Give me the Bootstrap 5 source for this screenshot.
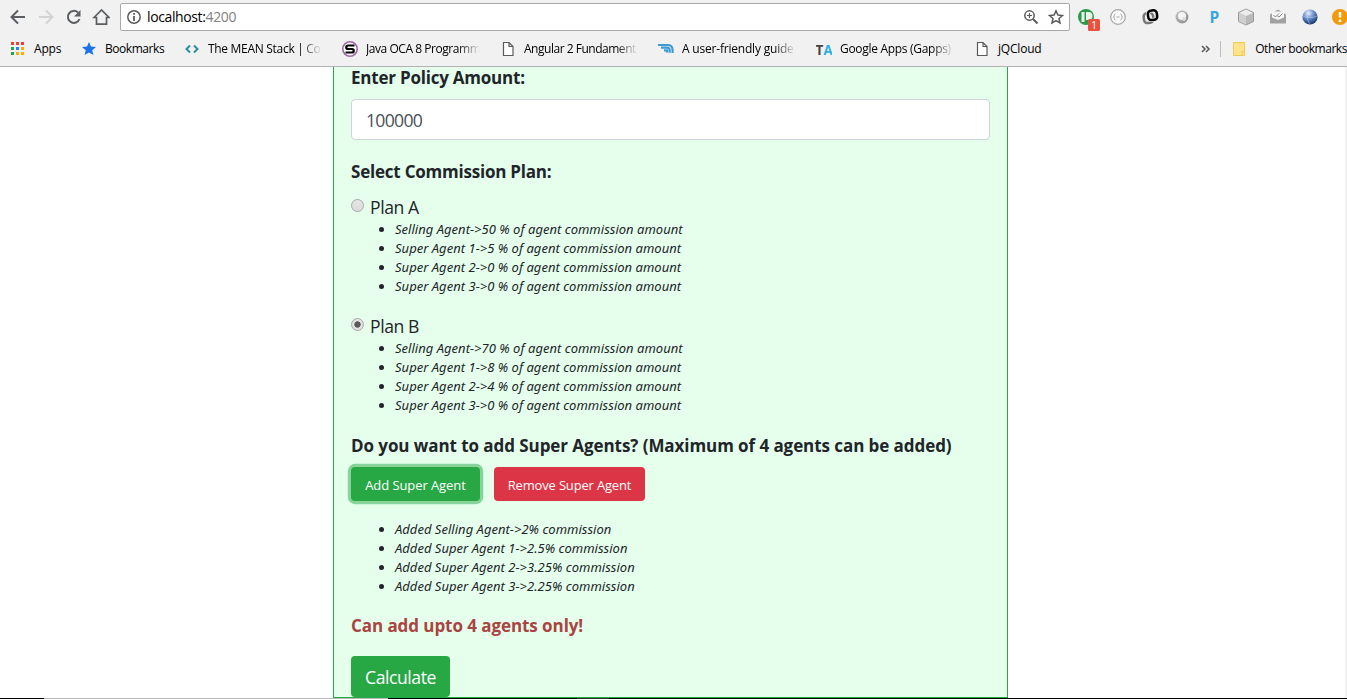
<!DOCTYPE html>
<html lang="en">
<head>
<meta charset="utf-8">
<meta name="viewport" content="width=device-width, initial-scale=1">
<title>Commission Calculator</title>
<link href="https://cdn.jsdelivr.net/npm/bootstrap@5.3.0/dist/css/bootstrap.min.css" rel="stylesheet">
<style>
  body { font-family: "Open Sans", "Noto Sans", sans-serif; color: #212529; height: 699px; overflow: hidden; background: #fff; }
  svg { display: block; flex: none; }
  .browser-bar { height: 67px; background: #f1f1f1; border-bottom: 1px solid #b3b1b3; font-size: 12px; color: #000; overflow: hidden; }
  .tool-row { height: 34px; padding-left: 9px; }
  .omnibox { flex: none; width: 950px; height: 28px; background: #fff; border: 1px solid #a9a8a9; border-radius: 2px; font-size: 14px; padding-left: 5px; padding-right: 4px; margin-left: 10px; }
  .address { letter-spacing: -.38px; margin-left: 5px; line-height: 20px; }
  .address span { color: #808080; }
  .marks-row { height: 30px; padding-left: 9px; }
  .mark-item { flex: none; display: flex; align-items: center; white-space: nowrap; height: 20px; }
  .mark-item svg { margin-right: 7px; }
  .mark-cut { width: 158px; }
  .mark-cut span { width: 114px; margin-left: 1px; -webkit-mask-image: linear-gradient(to left, transparent, #000 22px); mask-image: linear-gradient(to left, transparent, #000 22px); }
  .ls-2 { letter-spacing: -.2px; }
  .ls-3 { letter-spacing: -.3px; }
  .ls-4 { letter-spacing: -.45px; }
  .ls-5 { letter-spacing: -.48px; }
  .bar-sep { width: 1px; height: 16px; background: #bcbcbc; margin: 0 11px 0 8px; }
  .page-area { height: 631px; border-right: 2px solid #f1f1f1; }
  .form-panel { width: 675px; height: 631px; margin-left: 333px; background: #e6ffed; border: 1px solid #28a745; border-top: 0; padding: 0 17px; }
  .field-title { font-size: 17px; font-weight: 700; line-height: 18px; padding-top: 2px; margin: 0; white-space: nowrap; }
  .tight { letter-spacing: -.22px; }
  .snug { letter-spacing: -.07px; }
  .amount-input { height: 41px; font-size: 17.6px; letter-spacing: -.7px; padding: 1px 14px 0; border-color: #ced4da; border-radius: 4px; color: #495057; margin: 12px 0 21px; }
  .plan-label { font-size: 17.6px; height: 26px; line-height: 25px; letter-spacing: -.45px; }
  .plan-dot { appearance: none; flex: none; width: 13px; height: 13px; margin: 0 6px 3px 0; border: 1px solid #a8a8a8; border-radius: 50%; background: linear-gradient(#e6e6e6, #dcdcdc); }
  .plan-dot:checked { background: radial-gradient(circle, #5a5a5a 0 2.8px, #e2e2e2 3.6px); }
  .detail-list { font-family: "Noto Sans", "Open Sans", sans-serif; font-size: 13px; font-style: italic; line-height: 19px; letter-spacing: .02px; margin: 0; padding: 0 0 0 44px; list-style: none; }
  .detail-list li { position: relative; white-space: nowrap; width: max-content; }
  .detail-list li::before { content: ""; position: absolute; left: -16px; top: 7px; width: 5px; height: 5px; border-radius: 50%; background: #212529; }
  .agent-btn { height: 34px; padding: 2px 0 0; font-size: 13px; line-height: 20px; border: 0; border-radius: 4px; white-space: nowrap; color: #fff; }
  .agent-btn:hover { color: #fff; }
  .go-btn, .go-btn:hover { background: #28a745; width: 129px; letter-spacing: -.08px; }
  .stop-btn, .stop-btn:hover { background: #dc3545; width: 151px; letter-spacing: -.17px; }
  .ringed { box-shadow: 0 0 0 3.2px rgba(40,167,69,.5); }
  .calc-btn, .calc-btn:hover { background: #28a745; color: #fff; border: 0; border-radius: 4px; width: 99px; height: 41px; font-size: 17.6px; padding: 1px 0 0; letter-spacing: -.45px; }
  .limit-note { color: #a94442; }
  .desk-edge { height: 1px; background: linear-gradient(to right, #000 0 44px, #b8b8b8 44px 388px, #000 388px 577px, #2a2a2a 577px 609px, #000 609px); }
</style>
</head>
<body>
<header class="browser-bar">
  <div class="tool-row d-flex align-items-center">
    <svg width="17" height="18" viewBox="0 0 17 18" fill="none" stroke="#5a5d61" stroke-width="2"><path d="M9 2.500 2.500 9 9 15.500M2.500 9H16"/></svg>
    <svg class="mx-2" width="21" height="18" viewBox="0 0 21 18" fill="none" stroke="#d2d3d5" stroke-width="2"><path d="M12 2.500 18.500 9 12 15.500M18.500 9H5"/></svg>
    <svg width="21" height="18" viewBox="0 0 21 18"><path d="M16.500 11a6 6 0 1 1-1.500-6.500" fill="none" stroke="#5a5d61" stroke-width="2"/><path d="M17.500 2v6.500H11z" fill="#5a5d61"/></svg>
    <svg class="ms-2" width="18" height="18" viewBox="0 0 18 18"><path d="M2 9.500 9.500 2l7.500 7.500H14.500V16.200H4.500V9.500z" fill="none" stroke="#5a5d61" stroke-width="1.700"/></svg>
    <div class="omnibox d-flex align-items-center">
      <svg width="16" height="16" viewBox="0 0 16 16"><circle cx="8" cy="8" r="6.200" fill="none" stroke="#5a5a5a" stroke-width="1.500"/><path d="M8 7v5M8 4v1.800" stroke="#5a5a5a" stroke-width="1.800"/></svg>
      <div class="address">localhost:<span>4200</span></div>
      <svg class="ms-auto" width="16" height="16" viewBox="0 0 16 16" fill="none" stroke="#5a5a5a" stroke-width="1.500"><circle cx="6.500" cy="6.500" r="4.700"/><path d="m10 10 4.500 4.500" stroke-width="2"/><path d="M4 6.500h5M6.500 4v5" stroke-width="1.200"/></svg>
      <svg class="ms-2" width="18" height="16" viewBox="0 0 18 16"><path d="m9 1.800 1.900 4.200 4.600.5-3.500 3 1 4.500L9 11.700l-4 2.300 1-4.500-3.500-3L7.100 6z" fill="none" stroke="#5a5a5a" stroke-width="1.500"/></svg>
    </div>
    <svg width="277" height="34" viewBox="1070 0 277 34">
      <defs>
        <radialGradient id="globe" cx=".4" cy=".25" r=".75"><stop offset="0" stop-color="#e8f0fa"/><stop offset=".45" stop-color="#6e93cf"/><stop offset="1" stop-color="#17376f"/></radialGradient>
        <linearGradient id="ring" x2="1" y2="1"><stop offset="0" stop-color="#c4c4c4"/><stop offset="1" stop-color="#888"/></linearGradient>
      </defs>
      <circle cx="1086" cy="17" r="8" fill="#2c9a48"/><path d="M1081.500 12h3v10h-3zM1086 12h2.500a3.500 3.500 0 0 1 0 8h-2.500z" fill="#e9f4eb"/>
      <rect x="1088" y="19" width="12" height="12" rx="1.500" fill="#e8523f"/><text x="1094" y="29" font-size="10" text-anchor="middle" fill="#fff">1</text>
      <circle cx="1118" cy="17" r="7.300" fill="#f8f8f8" stroke="#a5a5a5" stroke-width="1.200"/><path d="M1115.500 14c-2 0-.5 3-2 3 1.500 0 0 3 2 3M1120.500 14c2 0 .5 3 2 3-1.500 0 0 3-2 3M1116.500 17h3" fill="none" stroke="#a5a5a5"/>
      <g fill="none" stroke-width="2.500"><rect x="1143.800" y="13" width="9.500" height="10" rx="3.500" stroke="#777" transform="rotate(-8 1148 18)"/><rect x="1148" y="10.500" width="9" height="9.500" rx="3.200" stroke="#f1f1f1" stroke-width="4" transform="rotate(-8 1152 15)"/><rect x="1148" y="10.500" width="9" height="9.500" rx="3.200" stroke="#000" transform="rotate(-8 1152 15)"/></g>
      <circle cx="1182" cy="17" r="6.500" fill="url(#ring)"/><circle cx="1182" cy="16" r="4" fill="#f4f4f4"/><circle cx="1184" cy="19" r="2" fill="#ddd"/>
      <text x="1209.500" y="22.500" font-size="15.500" font-weight="700" fill="#36a6dc">P</text>
      <path d="m1246 9 7.500 3.500v9L1246 25l-7.500-3.500v-9z" fill="#b9b9b9" stroke="#999"/><path d="m1239 13 7-3.500 7 3.500-7 3z" fill="#ededed"/><path d="M1239 13v8.500l7 3.200V16z" fill="#cfcfcf"/>
      <path d="m1270 14.500 8-5 8 5V23.500h-16z" fill="#a2a2a2"/><path d="M1272 11.500h12v6l-6 2.500-6-2.500z" fill="#f4f4f4"/><path d="m1273.500 15 2 2 3.500-3.500m-1.500 2.500 1.500 1 3.500-3.500" fill="none" stroke="#888"/>
      <circle cx="1310" cy="17" r="7.600" fill="url(#globe)"/><path d="M1303 16c4 2 10 2 14 0M1308 10c-2 4-1 10 2 14" fill="none" stroke="#d2e1f5" opacity=".45"/>
      <circle cx="1340" cy="17" r="8" fill="#f39a0b"/><path d="M1340 12v5.500M1340 19.500v2.500" stroke="#fff" stroke-width="2.500"/>
    </svg>
  </div>
  <nav class="marks-row d-flex align-items-center" aria-label="Bookmarks">
    <div class="mark-item" style="width:73px"><svg class="me-2" width="17" height="16" viewBox="0 0 17 16"><path fill="#ea4335" d="M2 1h3v3H2zM7 1h3v3H7zM12 1h3v3h-3z"/><path fill="#23a455" d="M2 6h3v3H2zM2 11h3v3H2z"/><path fill="#2684f0" d="M7 6h3v3H7z"/><path fill="#fbad04" d="M12 6h3v3h-3zM7 11h3v3H7zM12 11h3v3h-3z"/></svg><span class="ls-2">Apps</span></div>
    <div class="mark-item" style="width:102px"><svg width="16" height="16" viewBox="0 0 16 16"><path fill="#1a73e8" d="m7 1 2 4.500 5 .4-3.800 3.300L11.400 14 7 11.500 2.600 14l1.200-4.800L0 5.900l5-.4z"/></svg><span class="ls-4">Bookmarks</span></div>
    <div class="mark-item mark-cut"><svg width="16" height="16" viewBox="0 0 16 16" fill="none" stroke="#2a8f9a" stroke-width="2"><path d="M6 4.500 2.500 8 6 11.500M10 4.500 13.500 8 10 11.500"/></svg><span class="ls-3">The MEAN Stack | Co</span></div>
    <div class="mark-item mark-cut"><svg width="16" height="16" viewBox="0 0 16 16"><circle cx="8" cy="8" r="7.200" fill="#fff" stroke="#a06aa6" stroke-width="1.600"/><path d="M12.500 4.500H6a1.700 1.700 0 0 0 0 3.500h4a1.700 1.700 0 0 1 0 3.500H3.500" fill="none" stroke="#000" stroke-width="2.200"/></svg><span class="ls-4">Java OCA 8 Programm</span></div>
    <div class="mark-item mark-cut"><svg width="16" height="16" viewBox="0 0 16 16" fill="#fff" stroke="#5a5a5a" stroke-width="1.200"><path d="M3.500 1.500H9l4 4v9H3.500zM9 1.500v4h4"/></svg><span class="ls-5">Angular 2 Fundament</span></div>
    <div class="mark-item mark-cut"><svg width="16" height="16" viewBox="0 0 16 16" fill="none" stroke="#3d9bd3" stroke-width="2.200"><path d="M0 4h10c4 0 5 3 4.500 8M3 6.700h6c3 0 3 2 2.500 5M6 9.300h3v2.200"/></svg><span class="ls-2">A user-friendly guide</span></div>
    <div class="mark-item mark-cut"><svg width="16" height="16" viewBox="0 0 16 16" font-size="13.500" font-weight="700"><text x="-.5" y="13.500" fill="#444">T</text><text x="7.500" y="13.500" fill="#2eaee0" textLength="9" lengthAdjust="spacingAndGlyphs">A</text></svg><span class="ls-3">Google Apps (Gapps)</span></div>
    <div class="mark-item"><svg width="16" height="16" viewBox="0 0 16 16" fill="#fff" stroke="#5a5a5a" stroke-width="1.200"><path d="M3.500 1.500H9l4 4v9H3.500zM9 1.500v4h4"/></svg><span class="ls-2" style="margin-left:1px">jQCloud</span></div>
    <div class="ms-auto d-flex align-items-center">
      <svg width="12" height="12" viewBox="0 0 12 12" fill="none" stroke="#5a5d61" stroke-width="1.600"><path d="m2 3 3 3-3 3M6 3l3 3-3 3"/></svg>
      <div class="bar-sep"></div>
      <div class="mark-item"><svg width="16" height="16" viewBox="0 0 16 16"><path d="M1.500 1.500h11v9h-2v4h-9z" fill="#ffe38a" stroke="#eccb57"/><path d="M10 10.500h2.500v4H10z" fill="#ffe38a" stroke="#eccb57"/></svg><span class="ls-4">Other bookmarks</span></div>
    </div>
  </nav>
</header>
<div class="page-area">
<main class="form-panel">
  <h2 class="field-title tight">Enter Policy Amount:</h2>
  <input class="form-control amount-input" value="100000" aria-label="Policy amount">
  <h2 class="field-title tight">Select Commission Plan:</h2>
  <label class="plan-label d-flex align-items-center" style="margin-top:13px"><input class="plan-dot" type="radio" name="plan">Plan A</label>
  <ul class="detail-list">
    <li>Selling Agent-&gt;50 % of agent commission amount</li>
    <li>Super Agent 1-&gt;5 % of agent commission amount</li>
    <li>Super Agent 2-&gt;0 % of agent commission amount</li>
    <li>Super Agent 3-&gt;0 % of agent commission amount</li>
  </ul>
  <label class="plan-label d-flex align-items-center" style="margin-top:17px"><input class="plan-dot" type="radio" name="plan" checked>Plan B</label>
  <ul class="detail-list">
    <li>Selling Agent-&gt;70 % of agent commission amount</li>
    <li>Super Agent 1-&gt;8 % of agent commission amount</li>
    <li>Super Agent 2-&gt;4 % of agent commission amount</li>
    <li>Super Agent 3-&gt;0 % of agent commission amount</li>
  </ul>
  <h2 class="field-title snug" style="margin:20px 0 12px">Do you want to add Super Agents? (Maximum of 4 agents can be added)</h2>
  <div class="d-flex" style="gap:14px">
    <button class="btn agent-btn go-btn ringed">Add Super Agent</button>
    <button class="btn agent-btn stop-btn">Remove Super Agent</button>
  </div>
  <ul class="detail-list" style="margin:19px 0">
    <li>Added Selling Agent-&gt;2% commission</li>
    <li>Added Super Agent 1-&gt;2.5% commission</li>
    <li>Added Super Agent 2-&gt;3.25% commission</li>
    <li>Added Super Agent 3-&gt;2.25% commission</li>
  </ul>
  <p class="field-title snug limit-note" style="margin-bottom:21px">Can add upto 4 agents only!</p>
  <button class="btn calc-btn d-block">Calculate</button>
</main>
</div>
<div class="desk-edge"></div>
<script src="https://cdn.jsdelivr.net/npm/bootstrap@5.3.0/dist/js/bootstrap.bundle.min.js"></script>
</body>
</html>
